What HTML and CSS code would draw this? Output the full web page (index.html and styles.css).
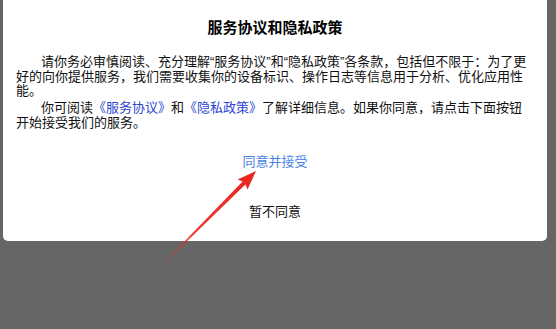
FILE: index.html
```html
<!DOCTYPE html>
<html lang="zh-CN">
<head>
  <meta charset="UTF-8" />
  <meta name="viewport" content="width=device-width, initial-scale=1.0" />
  <title>服务协议和隐私政策</title>
  <link rel="stylesheet" href="styles.css">
</head>
<body>
  <div class="dialog">
    <h2 class="title">服务协议和隐私政策</h2>

    <div class="content">
      <p>请你务必审慎阅读、充分理解“服务协议”和“隐私政策”各条款，包括但不限于：为了更好的向你提供服务，我们需要收集你的设备标识、操作日志等信息用于分析、优化应用性能。</p>
      <p>你可阅读<a href="#" class="link">《服务协议》</a>和<a href="#" class="link">《隐私政策》</a>了解详细信息。如果你同意，请点击下面按钮开始接受我们的服务。</p>
    </div>

    <div class="actions">
      <button class="btn btn-accept">同意并接受</button>
      <button class="btn btn-decline">暂不同意</button>
    </div>
  </div>

  <!-- annotation arrow drawn over the screenshot -->
  <svg class="arrow" width="556" height="329" viewBox="0 0 556 329">
    <defs>
      <linearGradient id="fade" x1="0" y1="0" x2="1" y2="0">
        <stop offset="0" stop-color="#e8261f" stop-opacity="0" />
        <stop offset="0.35" stop-color="#e8261f" stop-opacity="0.9" />
        <stop offset="1" stop-color="#e8261f" />
      </linearGradient>
    </defs>
    <g transform="translate(157 270) rotate(-45)">
      <polygon fill="url(#fade)" points="0,-0.3 123,-2 121,-7 140,0 121,7 123,2 0,0.3" />
    </g>
  </svg>
</body>
</html>
```

FILE: styles.css
```css
body {
  margin: 0;
  background: #666;
  font-family: "Noto Sans CJK SC", "Noto Sans", sans-serif;
  position: relative;
  height: 329px;
  overflow: hidden;
}

.dialog {
  width: 544px;
  height: 241px;
  margin-left: 3px;
  background: #fff;
  border-radius: 0 0 5px 5px;
  display: flex;
  flex-direction: column;
}

.title {
  margin: 0;
  padding-top: 17px;
  font-size: 15px;
  line-height: 20px;
  font-weight: bold;
  text-align: center;
  color: #000;
}

.content {
  margin-top: 18px;
  padding: 0 13px 0 13px;
  font-family: "Liberation Sans", "Noto Sans CJK SC", sans-serif;
  font-size: 13px;
  line-height: 14.5px;
  color: #111;
}

.content p {
  margin: 0 0 2.5px;
  text-indent: 25px;
}

.link {
  display: inline-block;
  text-indent: 0;
  color: #2b45d2;
  text-decoration: none;
}

.actions {
  margin-top: 2.5px;
  display: flex;
  flex-direction: column;
  align-items: center;
}

.btn {
  border: none;
  background: none;
  height: 50px;
  padding: 0 20px;
  font-family: inherit;
  font-size: 13px;
  cursor: pointer;
}

.btn-accept {
  color: #4a7fe4;
}

.btn-decline {
  color: #111;
}

.arrow {
  position: absolute;
  left: 0;
  top: 0;
  pointer-events: none;
}
```
